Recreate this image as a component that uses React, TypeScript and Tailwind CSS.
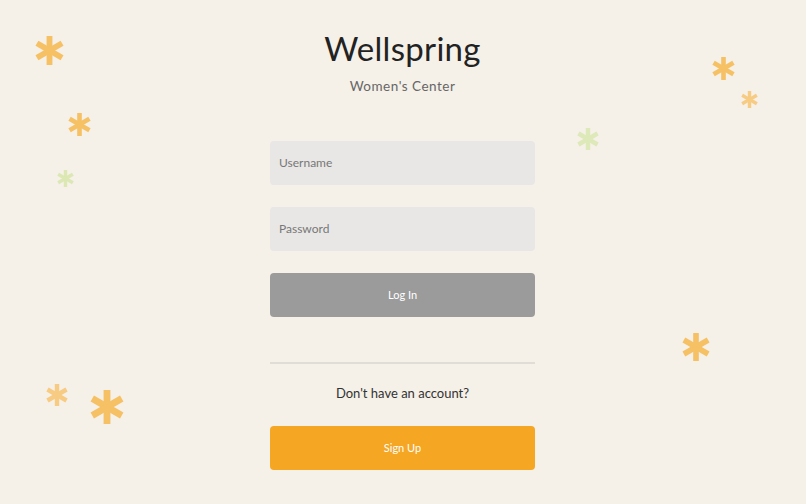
import React from "react"

type Star = { x: number; y: number; s: number; c: string }

const stars: Star[] = [
  { x: 49, y: 50, s: 29, c: "#f6c164" },
  { x: 79, y: 124, s: 23, c: "#f6c164" },
  { x: 65, y: 178, s: 17, c: "#dbe8b4" },
  { x: 723, y: 68, s: 23, c: "#f6c164" },
  { x: 749, y: 99, s: 17, c: "#f7cb82" },
  { x: 588, y: 139, s: 22, c: "#dde9b8" },
  { x: 696, y: 347, s: 28, c: "#f6c164" },
  { x: 57, y: 395, s: 22, c: "#f7cb82" },
  { x: 107, y: 407, s: 34, c: "#f6c164" },
]

function Asterisk({ x, y, s, c }: Star) {
  return (
    <svg
      className="absolute"
      style={{ left: x - s / 2, top: y - s / 2, width: s, height: s }}
      viewBox="0 0 24 24"
    >
      <g fill={c}>
        <rect x="9.6" y="0" width="4.8" height="24" />
        <rect x="9.6" y="0" width="4.8" height="24" transform="rotate(60 12 12)" />
        <rect x="9.6" y="0" width="4.8" height="24" transform="rotate(120 12 12)" />
      </g>
    </svg>
  )
}

export default function App() {
  return (
    <div
      className="relative w-[806px] h-[504px] overflow-hidden bg-[#f5f0e8]"
      style={{ fontFamily: "Lato, 'Noto Sans', sans-serif" }}
    >
      {stars.map((s, i) => (
        <Asterisk key={i} {...s} />
      ))}

      <div className="relative flex flex-col items-center pt-[26px] pr-px">
        <h1 className="text-[33px] leading-[44px] text-[#222222] tracking-[0.3px]">Wellspring</h1>
        <p className="mt-[6px] text-[13.5px] leading-[20px] text-[#666666] tracking-[0.5px]">Women's Center</p>

        <div className="mt-[45px] w-[265px] flex flex-col">
          <div className="h-[44px] rounded-[4px] bg-[#e8e7e5] flex items-center px-[9px] text-[12px] text-[#777777]">
            Username
          </div>
          <div className="mt-[22px] h-[44px] rounded-[4px] bg-[#e8e7e5] flex items-center px-[9px] text-[12px] text-[#777777]">
            Password
          </div>
          <button className="mt-[22px] h-[44px] rounded-[4px] bg-[#9b9b9b] text-white text-[11px] flex items-center justify-center">
            Log In
          </button>

          <div className="mt-[45px] h-[2px] bg-[#e0dcd6]" />

          <p className="mt-[19px] text-center text-[13px] leading-[20px] text-[#333333]">Don't have an account?</p>

          <button className="mt-[23px] h-[44px] rounded-[4px] bg-[#f5a623] text-white text-[11px] flex items-center justify-center">
            Sign Up
          </button>
        </div>
      </div>
    </div>
  )
}
